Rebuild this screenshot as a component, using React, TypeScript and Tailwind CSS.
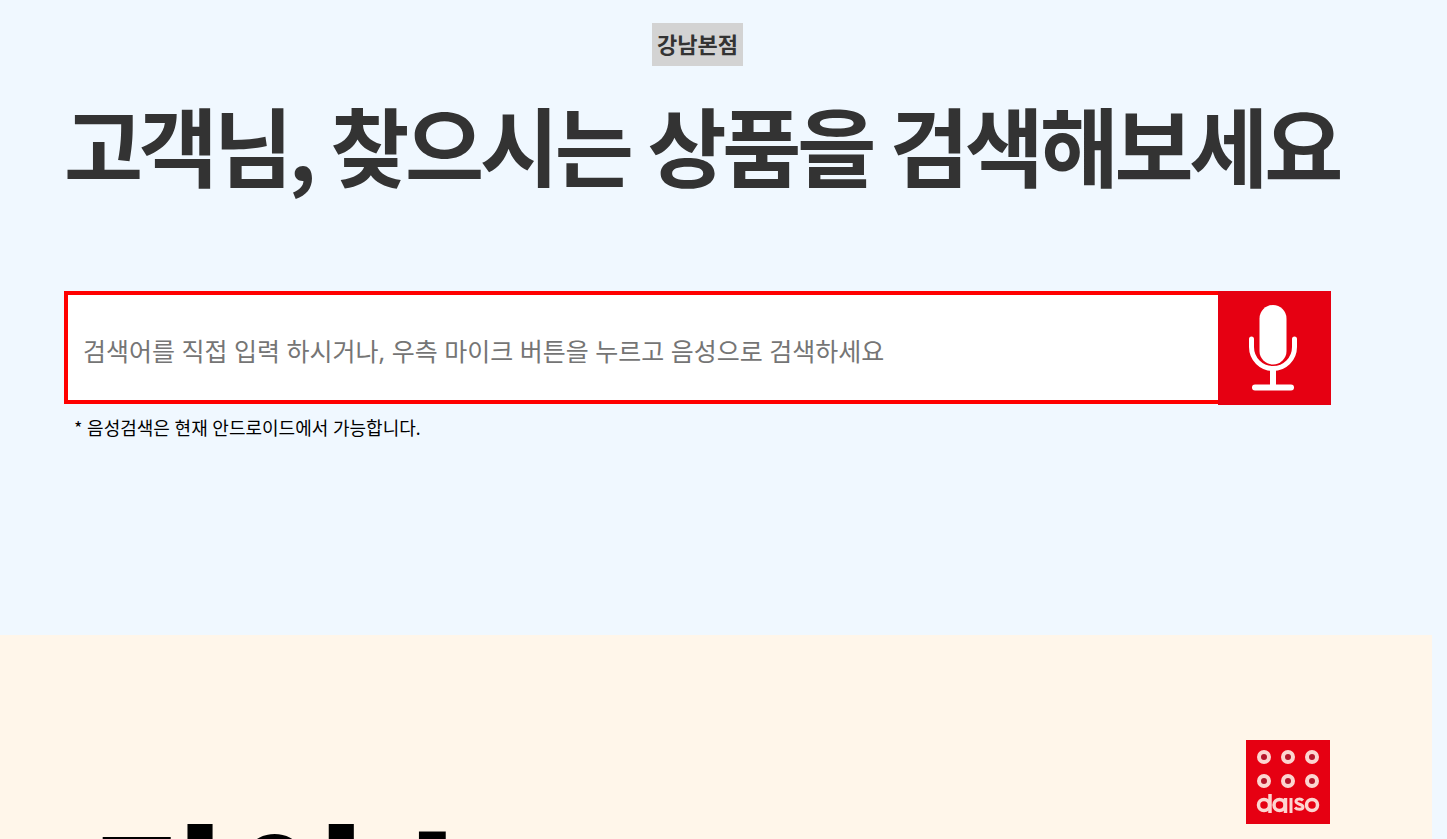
import { useState } from 'react';

const dots = [18, 42, 66];

function MicIcon() {
  return (
    <svg viewBox="0 0 113 114" className="w-full h-full" fill="none" aria-hidden="true">
      <rect x="41.500" y="14" width="27" height="59.500" rx="13.500" fill="#fff" />
      <path d="M33.500 48v8a21.500 21.500 0 0 0 43 0v-8" stroke="#fff" strokeWidth="5" strokeLinecap="round" />
      <path d="M55 79v16" stroke="#fff" strokeWidth="6" />
      <path d="M37 96.500h36" stroke="#fff" strokeWidth="6" strokeLinecap="round" />
    </svg>
  );
}

function DaisoLogo() {
  return (
    <svg viewBox="0 0 84 84" className="w-21 h-21" role="img" aria-label="daiso">
      <rect width="84" height="84" fill="#e60012" />
      {[17, 41].map((y) =>
        dots.map((x) => (
          <circle key={`${x}-${y}`} cx={x} cy={y} r="5" fill="#b5162b" stroke="#fcd5d0" strokeWidth="4" />
        ))
      )}
      {/* Wordmark */}
      <g fill="none" stroke="#fcd5d0" strokeWidth="3.500">
        <circle cx="18" cy="65" r="5.500" />
        <path d="M24 54v19" />
        <circle cx="33.500" cy="65" r="5.500" />
        <path d="M39.500 58v15" />
        <path d="M45 58v15" strokeWidth="3" />
        <path d="M57 60.500c-2-2-7-2-7 1s7 2.500 7 5.500-6 3-8 0.500" strokeWidth="3" />
        <circle cx="66" cy="65" r="5.500" />
      </g>
    </svg>
  );
}

export default function App() {
  const [keyword, setKeyword] = useState('');

  return (
    <div className="min-h-screen bg-[#f0f8ff] font-['Noto_Sans','Noto_Sans_CJK_KR',sans-serif] text-black">
      <section className="h-[635px] pt-[23px] pl-16 pr-[116px]">
        <div className="flex justify-center">
          <span className="bg-[#d3d3d3] p-[5px] text-[22px] leading-[33px] font-bold text-[#333333]">강남본점</span>
        </div>

        <h1 className="mt-3 text-[86px] leading-[132px] font-bold tracking-tighter whitespace-nowrap text-[#333333]">
          고객님<span className="font-['Noto_Sans_CJK_KR',sans-serif]">,</span> 찾으시는 상품을 검색해보세요
        </h1>

        {/* Search bar */}
        <form className="mt-[77px] flex" onSubmit={(e) => e.preventDefault()}>
          <input
            type="text"
            aria-label="검색어"
            placeholder="검색어를 직접 입력 하시거나, 우측 마이크 버튼을 누르고 음성으로 검색하세요"
            className="h-[113px] min-w-0 flex-1 border-4 border-r-0 border-[#ff0000] bg-white px-[15px] pt-[6px] text-[25px] placeholder:text-[#757575] focus:outline-none"
            value={keyword}
            onChange={(e) => setKeyword(e.target.value)}
          />
          <button type="button" aria-label="음성검색" className="h-[114px] w-[113px] bg-[#e60012]">
            <MicIcon />
          </button>
        </form>

        <p className="mt-[7px] pl-[10px] text-[18px] leading-[30px]">
          <span className="font-['Noto_Sans_CJK_KR',sans-serif]">*</span> 음성검색은 현재 안드로이드에서 가능합니다.
        </p>
      </section>

      {/* Banner */}
      <section className="mr-[15px] h-[600px] bg-[#fff6ea] pt-[105px] pl-[92px] pr-[102px]">
        <div className="flex items-start justify-between">
          <h2 className="mt-[43px] text-[155px] leading-[224px] font-black tracking-tighter">다이소</h2>
          <DaisoLogo />
        </div>
      </section>
    </div>
  );
}
